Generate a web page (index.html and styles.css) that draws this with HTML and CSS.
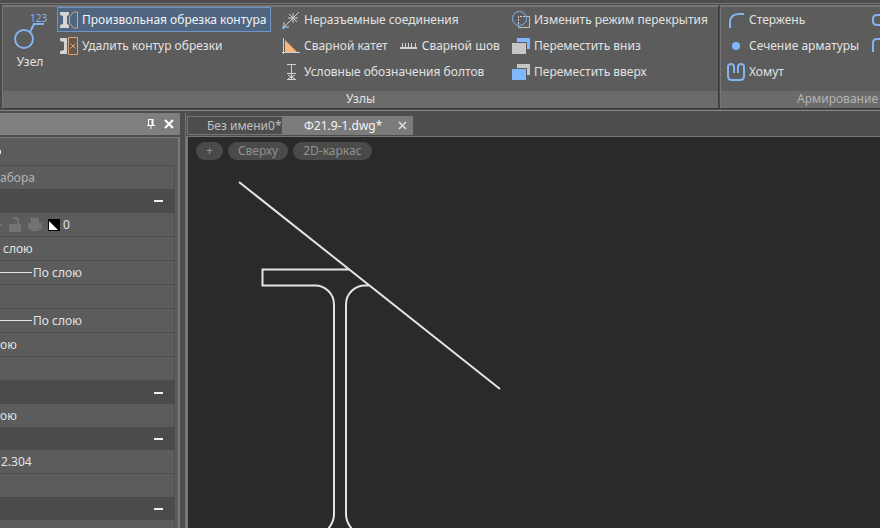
FILE: index.html
```html
<!DOCTYPE html>
<html lang="ru">

<head>
    <meta charset="utf-8">
    <title>Ф21.9-1.dwg</title>
    <link rel="stylesheet" href="styles.css">
</head>

<body>
    <header class="ribbon">
        <section class="group nodes">
            <div class="tools">
                <button class="big-tool">
                    <svg width="40" height="38" viewBox="0 0 40 38">
                        <circle cx="14" cy="26" r="9" fill="none" stroke="#83b4ef" stroke-width="2" />
                        <path d="M20 19l4-8h10" fill="none" stroke="#83b4ef" stroke-width="2" />
                        <text x="20" y="9" class="digits">123</text>
                    </svg>
                    Узел
                </button>
                <div class="column clip">
                    <button class="tool active">
                        <svg width="18" height="18" viewBox="0 0 18 18">
                            <path d="M0 1h9v3l-2 1v8l2 1v3H0v-3l3-1V5L0 4z" fill="#d4d4d4" />
                            <path d="M17.5 1h-4L9.5 6v6l4 5h4z" fill="none" stroke="#d9a577" />
                        </svg>
                        Произвольная обрезка контура
                    </button>
                    <button class="tool">
                        <svg width="18" height="18" viewBox="0 0 18 18">
                            <path d="M0 1h7v16H0v-3l4-1V5L0 4z" fill="#d4d4d4" />
                            <path d="M8.5 0.5h9v17h-9zM10.5 6.5l5 5m0-5l-5 5" fill="#62584f" stroke="#e0a470" />
                        </svg>
                        Удалить контур обрезки
                    </button>
                </div>
                <div class="column joints">
                    <button class="tool">
                        <svg width="18" height="18" viewBox="0 0 18 18">
                            <path d="M2 16L17 1M2 11v5h5M6 7h10M11 2v10M7 3l8 8" fill="none" stroke="#d0d0d0" />
                            <circle cx="1.5" cy="16.5" r="1.5" fill="#83b4ef" />
                        </svg>
                        Неразъемные соединения
                    </button>
                    <div class="pair">
                        <button class="tool">
                            <svg width="18" height="18" viewBox="0 0 18 18">
                                <path d="M3 3l12 12H3z" fill="#fbb578" />
                                <path d="M1.5 1v16M0 15.5h18" stroke="#d0d0d0" />
                            </svg>
                            Сварной катет
                        </button>
                        <button class="tool">
                            <svg width="18" height="18" viewBox="0 0 18 18">
                                <path d="M0 11h17" stroke="#d0d0d0" stroke-width="2" />
                                <path d="M2.5 6v5M5.5 6v5M8.5 6v5M11.5 6v5M15.5 6v5" stroke="#d0d0d0" />
                            </svg>
                            Сварной шов
                        </button>
                    </div>
                    <button class="tool">
                        <svg width="18" height="18" viewBox="0 0 18 18">
                            <path d="M5 1.5h9M9.5 1v16M5 10.5h9M6 12l7 4M13 12l-7 4M5 16.5h9" fill="none" stroke="#d0d0d0" />
                        </svg>
                        Условные обозначения болтов
                    </button>
                </div>
                <div class="column order">
                    <button class="tool">
                        <svg width="18" height="18" viewBox="0 0 18 18">
                            <path d="M14 5.5h3.5v11h-11V14" fill="none" stroke="#c0c0c0" />
                            <path d="M6.5 13V5.5H13" fill="none" stroke="#d0d0d0" stroke-dasharray="2 1" />
                            <circle cx="7.5" cy="7.5" r="7" fill="none" stroke="#83b4ef" />
                        </svg>
                        Изменить режим перекрытия
                    </button>
                    <button class="tool">
                        <svg width="18" height="18" viewBox="0 0 18 18">
                            <path d="M5 1h13v11h-3V5H5z" fill="#80b7fb" />
                            <path d="M0 6h14v11H0z" fill="#c6c6c6" />
                        </svg>
                        Переместить вниз
                    </button>
                    <button class="tool">
                        <svg width="18" height="18" viewBox="0 0 18 18">
                            <path d="M5 1h13v11h-3V5H5z" fill="#c6c6c6" />
                            <path d="M0 6h14v11H0z" fill="#80b7fb" />
                        </svg>
                        Переместить вверх
                    </button>
                </div>
            </div>
            <h2 class="group-title">Узлы</h2>
        </section>
        <section class="group rebar">
            <div class="tools">
                <div class="column bars">
                    <button class="tool">
                        <svg width="18" height="18" viewBox="0 0 18 18">
                            <path d="M3 17v-5q0-9 9-9h5" fill="none" stroke="#83b4ef" stroke-width="2" />
                        </svg>
                        Стержень
                    </button>
                    <button class="tool">
                        <svg width="18" height="18" viewBox="0 0 18 18">
                            <circle cx="9" cy="9" r="4" fill="#80b7fb" />
                        </svg>
                        Сечение арматуры
                    </button>
                    <button class="tool">
                        <svg width="18" height="18" viewBox="0 0 18 18">
                            <path d="M7 10V4q0-3-3-3T1 4v9q0 4 4 4h8q4 0 4-4V4q0-3-3-3t-3 3v6" fill="none" stroke="#83b4ef" stroke-width="2" />
                        </svg>
                        Хомут
                    </button>
                </div>
                <div class="column more">
                    <button class="tool" aria-label="Скоба">
                        <svg width="18" height="18" viewBox="0 0 18 18">
                            <path d="M18 4H5Q1 4 1 8v2q0 4 4 4h13" fill="none" stroke="#83b4ef" stroke-width="2" />
                        </svg>
                    </button>
                    <button class="tool" aria-label="Шпилька">
                        <svg width="18" height="18" viewBox="0 0 18 18">
                            <path d="M1 15V6q0-4 4-4h13" fill="none" stroke="#83b4ef" stroke-width="2" />
                        </svg>
                    </button>
                </div>
            </div>
            <h2 class="group-title muted">Армирование</h2>
        </section>
    </header>

    <div class="workspace">
        <aside class="panel">
            <div class="panel-head">
                <button class="icon-button" aria-label="Закрепить">
                    <svg width="10" height="10" viewBox="0 0 10 10">
                        <path d="M2.5 0v6M1 6.5h8M2 0.5h5M5 6v4" stroke="#fff" />
                        <path d="M6.5 0v6" stroke="#fff" stroke-width="2" />
                    </svg>
                </button>
                <button class="icon-button" aria-label="Закрыть">
                    <svg width="10" height="10" viewBox="0 0 10 10">
                        <path d="M1 1l8 8M9 1L1 9" stroke="#fff" stroke-width="2" />
                    </svg>
                </button>
            </div>
            <div class="properties">
                <div class="caption"><i class="knob"></i></div>
                <div class="row first muted">абора</div>
                <button class="section tall" aria-label="Общие"><i class="minus"></i></button>
                <div class="row layer">
                    <i class="bulb"></i>
                    <svg width="14" height="16" viewBox="0 0 14 16">
                        <path d="M1 7h12v8H1z" fill="#737373" />
                        <path d="M10 7V3q0-2-2-2T5 2" fill="none" stroke="#737373" stroke-width="2" />
                    </svg>
                    <svg width="14" height="16" viewBox="0 0 14 16">
                        <path d="M3 1h8v5h3v6h-3v2H3v-2H0V6h3z" fill="#737373" />
                    </svg>
                    <svg width="12" height="12" viewBox="0 0 12 12">
                        <path d="M0 0h12v12H0z" fill="#000" />
                        <path d="M1 2l9 9H1z" fill="#fff" />
                    </svg>
                    <span>0</span>
                </div>
                <div class="row indent">слою</div>
                <div class="row"><i class="sample"></i>По слою</div>
                <div class="row"></div>
                <div class="row"><i class="sample"></i>По слою</div>
                <div class="row">ою</div>
                <div class="row"></div>
                <button class="section" aria-label="Визуализация"><i class="minus"></i></button>
                <div class="row last">ою</div>
                <button class="section" aria-label="Геометрия"><i class="minus"></i></button>
                <div class="row"><input class="value" type="text" value="2.304" aria-label="Длина"></div>
                <div class="row last"></div>
                <button class="section" aria-label="Разное"><i class="minus"></i></button>
                <div class="row"></div>
            </div>
        </aside>

        <main class="document">
            <nav class="tabs">
                <button class="tab">Без имени0*</button>
                <button class="tab current">Ф21.9-1.dwg*
                    <svg width="9" height="9" viewBox="0 0 9 9">
                        <path d="M1 1l7 7M8 1L1 8" stroke="#e0e0e0" stroke-width="1.5" />
                    </svg>
                </button>
            </nav>
            <div class="view">
                <!-- beam section with the cutting line -->
                <svg class="drawing" width="692" height="391" viewBox="188 137 692 391">
                    <path d="M239 182L500 389M349 269.5H262.5v16H315A19 19 0 0 1 334 304.5V514q0 8-6 15M369 285.5h-4A19 19 0 0 0 346 304.5V514q0 8 6 15" />
                </svg>
                <div class="view-controls">
                    <button class="pill">+</button>
                    <button class="pill">Сверху</button>
                    <button class="pill">2D-каркас</button>
                </div>
            </div>
        </main>
    </div>
</body>

</html>
```
FILE: styles.css
```css
* {
    box-sizing: border-box;
}

body {
    margin: 0;
    height: 100vh;
    display: flex;
    flex-direction: column;
    overflow: hidden;
    background: #4d4d4d;
    color: #e2e2e2;
    font: 12px/16px "Noto Sans", "Open Sans", sans-serif;
}

button {
    padding: 0;
    border: 0;
    background: none;
    color: inherit;
    font: inherit;
    white-space: nowrap;
}

svg {
    display: block;
    flex: none;
}

.ribbon {
    display: flex;
    gap: 1px;
    margin-top: 3px;
    padding: 1px 0 1px 2px;
    border-top: 1px solid #777;
    border-bottom: 1px solid #888;
    background: #4a4a4a;
}

.group {
    display: flex;
    flex-direction: column;
    flex: none;
    height: 104px;
    border: 1px solid #777;
    border-top-width: 2px;
    border-right-color: #3c3c3c;
    border-bottom-color: #3c3c3c;
    background: #5c5c5c;
}

.nodes {
    width: 717px;
}

.rebar {
    flex: 1;
    min-width: 0;
    border-right: 0;
    overflow: hidden;
}

.rebar .group-title {
    padding-right: 2px;
    text-align: right;
}

.tools {
    display: flex;
    flex: 1;
}

.group-title {
    margin: 0;
    height: 17px;
    background: #6b6b6b;
    font-size: 12px;
    font-weight: normal;
    text-align: center;
}

.muted {
    color: #b4b4b4;
}

.big-tool {
    display: flex;
    flex-direction: column;
    align-items: center;
    width: 54px;
    padding-top: 6px;
    gap: 3px;
}

.digits {
    fill: #83b4ef;
    font-size: 10px;
}

.column {
    display: flex;
    flex-direction: column;
    align-items: flex-start;
    gap: 1px;
}

.clip {
    width: 222px;
}

.joints {
    width: 230px;
}

.bars {
    width: 148px;
    flex: none;
    padding-left: 3px;
}

.more {
    min-width: 0;
    overflow: hidden;
}

.tool {
    display: flex;
    align-items: center;
    gap: 4px;
    height: 25px;
    padding: 0 4px 0 2px;
    border: 1px solid transparent;
}

.active {
    border-color: #6f95c4;
    background: #506580;
    color: #f4f4f4;
}

.pair {
    display: flex;
    gap: 4px;
}

.workspace {
    display: flex;
    flex: 1;
    gap: 5px;
    min-height: 0;
    padding-top: 2px;
}

.panel {
    display: flex;
    flex-direction: column;
    width: 180px;
    flex: none;
}

.panel-head {
    display: flex;
    justify-content: flex-end;
    align-items: center;
    gap: 8px;
    height: 22px;
    padding-right: 6px;
    background: #7f7f7f;
}

.properties {
    flex: 1;
    margin-top: 2px;
    padding: 0 3px 0 0;
    border: solid #7b7b7b;
    border-width: 1px 2px 0 0;
    background: #5c5c5c;
    overflow: hidden;
}

.caption {
    display: flex;
    align-items: center;
    height: 27px;
}

.knob {
    width: 1px;
    height: 4px;
    background: #e0e0e0;
}

.row {
    display: flex;
    align-items: center;
    height: 24px;
    border: solid #4d4d4d;
    border-width: 0 1px 1px 0;
}

.first {
    border-width: 1px 1px 0 0;
}

.last {
    height: 23px;
    border-bottom: 0;
}

.indent {
    padding-left: 3px;
}

.section {
    display: flex;
    align-items: center;
    justify-content: flex-end;
    width: 100%;
    height: 23px;
    padding-right: 12px;
    background: #4b4b4b;
}

.tall {
    height: 24px;
}

.minus {
    width: 9px;
    height: 2px;
    background: #f0f0f0;
}

.layer {
    gap: 6px;
}

.layer span {
    margin-left: -3px;
}

.bulb {
    width: 2px;
    height: 2px;
    background: #737373;
}

.sample {
    width: 32px;
    height: 1px;
    margin-right: 1px;
    background: #e2e2e2;
}

.value {
    width: 100%;
    padding: 0 1px;
    border: 0;
    background: none;
    color: inherit;
    font: inherit;
}

.document {
    display: flex;
    flex-direction: column;
    flex: 1;
    min-width: 0;
    border-left: 1px solid #777;
}

.tabs {
    display: flex;
    height: 23px;
    padding: 3px 0 1px 1px;
}

.tab {
    display: flex;
    align-items: center;
    justify-content: space-between;
    width: 95px;
    padding-left: 19px;
    border: solid #777;
    border-width: 1px 0 1px 1px;
    color: #c0c0c0;
}

.current {
    width: 131px;
    padding: 0 6px 0 22px;
    border: 0;
    background: #7b7b7b;
    color: #f4f4f4;
}

.view {
    position: relative;
    flex: 1;
    border: solid #777;
    border-width: 1px 0 0 2px;
    background: #2a2a2a;
    overflow: hidden;
}

.drawing {
    position: absolute;
    top: 0;
    left: 0;
}

.drawing path {
    fill: none;
    stroke: #e4e4e4;
    stroke-width: 2px;
}

.view-controls {
    position: absolute;
    top: 5px;
    left: 8px;
    display: flex;
    gap: 5px;
}

.pill {
    height: 18px;
    padding: 0 10px;
    border-radius: 9px;
    background: #4a4a4a;
    color: #929292;
}
```
